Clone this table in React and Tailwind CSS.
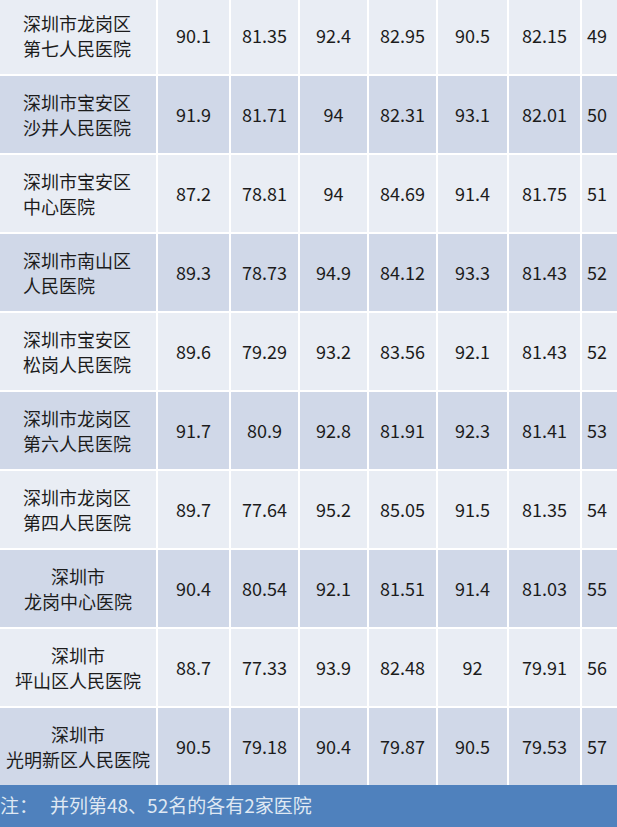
const rows = [
  ["深圳市龙岗区", "第七人民医院", "left", "90.1", "81.35", "92.4", "82.95", "90.5", "82.15", "49"],
  ["深圳市宝安区", "沙井人民医院", "left", "91.9", "81.71", "94", "82.31", "93.1", "82.01", "50"],
  ["深圳市宝安区", "中心医院", "left", "87.2", "78.81", "94", "84.69", "91.4", "81.75", "51"],
  ["深圳市南山区", "人民医院", "left", "89.3", "78.73", "94.9", "84.12", "93.3", "81.43", "52"],
  ["深圳市宝安区", "松岗人民医院", "left", "89.6", "79.29", "93.2", "83.56", "92.1", "81.43", "52"],
  ["深圳市龙岗区", "第六人民医院", "left", "91.7", "80.9", "92.8", "81.91", "92.3", "81.41", "53"],
  ["深圳市龙岗区", "第四人民医院", "left", "89.7", "77.64", "95.2", "85.05", "91.5", "81.35", "54"],
  ["深圳市", "龙岗中心医院", "center", "90.4", "80.54", "92.1", "81.51", "91.4", "81.03", "55"],
  ["深圳市", "坪山区人民医院", "center", "88.7", "77.33", "93.9", "82.48", "92", "79.91", "56"],
  ["深圳市", "光明新区人民医院", "center", "90.5", "79.18", "90.4", "79.87", "90.5", "79.53", "57"],
];

export default function App() {
  return (
    <div
      className="w-[617px] h-[827px] overflow-hidden bg-white flex flex-col text-[#1c1c1c]"
      style={{ fontFamily: '"Noto Sans CJK SC", "Noto Sans", sans-serif' }}
    >
      <div className="h-[785px] overflow-hidden">
        <div className="-mt-[3px] grid grid-cols-[156px_71px_67px_67px_67px_69px_71px_50px] gap-[2px] bg-white text-[18px]">
          {rows.map((r, i) => {
            const bg = i % 2 === 0 ? "bg-[#e9edf4]" : "bg-[#d0d8e8]";
            return [
              <div key={`n${i}`} className={`${bg} h-[77px] flex items-center justify-center`}>
                <div className={`leading-[25px] ${r[2] === "center" ? "text-center" : "text-left"} ${r[2] === "left" ? "w-[110px] pr-[2px]" : ""}`}>
                  <div>{r[0]}</div>
                  <div>{r[1]}</div>
                </div>
              </div>,
              ...r.slice(3, 9).map((v, j) => (
                <div key={`c${i}-${j}`} className={`${bg} h-[77px] flex items-center justify-center`}>
                  {v}
                </div>
              )),
              <div key={`r${i}`} className={`${bg} h-[77px] flex items-center pl-[5px]`}>
                {r[9]}
              </div>,
            ];
          })}
        </div>
      </div>
      <div className="flex-1 bg-[#4f81bd] text-[#dfe8f3] text-[19px] flex items-center pb-[2px]">
        <span>注：</span>
        <span className="ml-[12px]">并列第48、52名的各有2家医院</span>
      </div>
    </div>
  );
}
